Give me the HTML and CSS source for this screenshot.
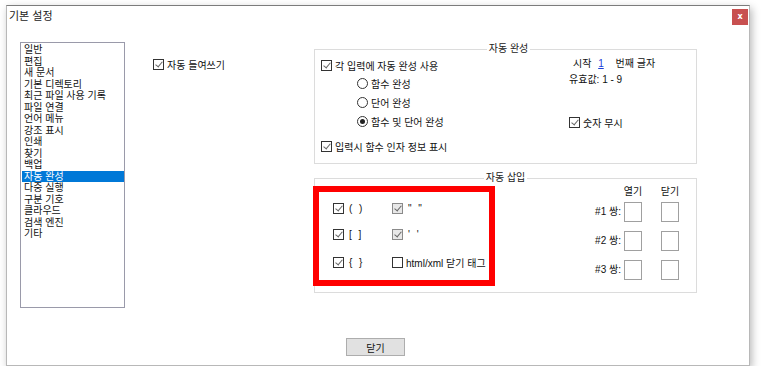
FILE: index.html
```html
<!DOCTYPE html>
<html lang="ko">
<head>
    <meta charset="UTF-8">
    <title>기본 설정</title>
    <link rel="stylesheet" href="styles.css">
</head>
<body>
    <div class="window">
        <div class="titlebar">
            <span class="title">기본 설정</span>
            <span class="close-x">x</span>
        </div>

        <div class="content">
            <ul class="menu-list">
                <li>일반</li>
                <li>편집</li>
                <li>새 문서</li>
                <li>기본 디렉토리</li>
                <li>최근 파일 사용 기록</li>
                <li>파일 연결</li>
                <li>언어 메뉴</li>
                <li>강조 표시</li>
                <li>인쇄</li>
                <li>찾기</li>
                <li>백업</li>
                <li class="selected">자동 완성</li>
                <li>다중 실행</li>
                <li>구분 기호</li>
                <li>클라우드</li>
                <li>검색 엔진</li>
                <li>기타</li>
            </ul>

            <div class="side-col">
                <label class="opt opt-indent"><span class="chk on"></span>자동 들여쓰기</label>
            </div>

            <div class="groups">
                <fieldset class="group">
                    <legend>자동 완성</legend>
                    <div class="complete-grid">
                        <div class="complete-left">
                            <label class="opt row-first"><span class="chk on"></span>각 입력에 자동 완성 사용</label>
                            <label class="opt row-radio"><span class="radio"></span>함수 완성</label>
                            <label class="opt row-radio"><span class="radio"></span>단어 완성</label>
                            <label class="opt row-radio"><span class="radio on"></span>함수 및 단어 완성</label>
                            <label class="opt row-last"><span class="chk on"></span>입력시 함수 인자 정보 표시</label>
                        </div>
                        <div class="complete-right">
                            <div class="start-row">시작 <span class="start-num">1</span> 번째 글자</div>
                            <div class="valid-row">유효값: 1 - 9</div>
                            <label class="opt row-num"><span class="chk on"></span>숫자 무시</label>
                        </div>
                    </div>
                </fieldset>

                <fieldset class="group group-insert">
                    <legend>자동 삽입</legend>
                    <div class="insert-wrap">
                        <div class="insert-grid">
                            <label class="opt"><span class="chk on"></span><span class="sym">( )</span></label>
                            <label class="opt"><span class="chk on dim"></span><span class="sym">" "</span></label>
                            <label class="opt"><span class="chk on"></span><span class="sym">[ ]</span></label>
                            <label class="opt"><span class="chk on dim"></span><span class="sym">' '</span></label>
                            <label class="opt"><span class="chk on"></span><span class="sym">{ }</span></label>
                            <label class="opt"><span class="chk"></span>html/xml 닫기 태그</label>
                        </div>
                        <div class="pair-grid">
                            <span></span>
                            <span class="pair-head">열기</span>
                            <span class="pair-head">닫기</span>

                            <span class="pair-label">#1 쌍:</span>
                            <span class="pair-box"></span>
                            <span class="pair-box"></span>

                            <span class="pair-label">#2 쌍:</span>
                            <span class="pair-box"></span>
                            <span class="pair-box"></span>

                            <span class="pair-label">#3 쌍:</span>
                            <span class="pair-box"></span>
                            <span class="pair-box"></span>
                        </div>
                    </div>
                </fieldset>

                <!-- annotation frame drawn over the insert options -->
                <div class="highlight-frame"></div>
            </div>
        </div>

        <div class="footer">
            <button class="btn-close">닫기</button>
        </div>
    </div>
</body>
</html>
```

FILE: styles.css
```css
body {
    margin: 0;
    background: #ffffff;
    font-family: "Liberation Sans", "Noto Sans CJK KR", sans-serif;
    font-size: 10px;
    color: #111111;
}
.window {
    box-sizing: border-box;
    width: 744px;
    height: 361px;
    margin: 5px 0 0 6px;
    background: #ffffff;
    border: 1px solid #b8b8b8;
    border-top-color: #7c7c7c;
    box-shadow: 2px 3px 8px rgba(0, 0, 0, 0.28);
    display: flex;
    flex-direction: column;
}
.titlebar {
    height: 36px;
    display: flex;
    justify-content: space-between;
    align-items: flex-start;
}
.title {
    font-size: 11px;
    line-height: 14px;
    padding: 3px 0 0 2px;
    color: #1a1a1a;
}
.close-x {
    width: 16px;
    height: 16px;
    margin: 3px 1px 0 0;
    background: #c85050;
    color: #ffffff;
    font-family: "DejaVu Sans", sans-serif;
    font-weight: bold;
    font-size: 8px;
    line-height: 15px;
    text-align: center;
}
.content {
    display: flex;
    padding-left: 13px;
    height: 266px;
}

/* left category list */
.menu-list {
    box-sizing: border-box;
    width: 105px;
    height: 266px;
    margin: 0;
    padding: 1px 0 0 0;
    list-style: none;
    border: 1px solid #9a9aaa;
}
.menu-list li {
    line-height: 11.5px;
    height: 11.5px;
    margin-left: 1px;
    padding-left: 2px;
    white-space: nowrap;
}
.menu-list li.selected {
    background: #0078d7;
    color: #ffffff;
}

.side-col {
    width: 161px;
    margin-left: 28px;
    flex: none;
}
.opt-indent {
    margin-top: 13px;
    height: 18px;
}

/* generic option rows */
.opt {
    display: flex;
    align-items: center;
    white-space: nowrap;
}
.chk {
    box-sizing: border-box;
    width: 11px;
    height: 11px;
    border: 1px solid #333333;
    background: #ffffff;
    margin-right: 3px;
    flex: none;
    position: relative;
}
.chk.on::after {
    content: "";
    position: absolute;
    left: 3px;
    top: 0px;
    width: 3px;
    height: 6px;
    border: solid #666666;
    border-width: 0 1px 1px 0;
    transform: rotate(40deg);
}
.chk.dim {
    border-color: #8a8a8a;
    background: #e8e8e8;
}
.sym {
    letter-spacing: 2px;
    padding-left: 2px;
}
.radio {
    box-sizing: border-box;
    width: 11px;
    height: 11px;
    border: 1px solid #333333;
    border-radius: 50%;
    margin-right: 3px;
    flex: none;
    display: flex;
    align-items: center;
    justify-content: center;
}
.radio.on::after {
    content: "";
    width: 5px;
    height: 5px;
    border-radius: 50%;
    background: #222222;
}

/* group boxes */
.groups {
    position: relative;
    width: 383px;
}
.group {
    box-sizing: border-box;
    width: 383px;
    height: 122px;
    margin: 0;
    padding: 0 0 0 6px;
    border: 1px solid #dcdcdc;
}
.group legend {
    margin: 0 auto;
    padding: 0 2px;
    line-height: 14px;
    font-size: 10px;
    color: #222222;
}
.group-insert {
    margin-top: 7px;
    padding: 0;
}

.complete-grid {
    display: grid;
    grid-template-columns: 248px auto;
}
.row-first {
    height: 18px;
}
.row-radio {
    height: 19px;
    padding-left: 36px;
}
.row-last {
    height: 19px;
    margin-top: 6px;
}
.start-row {
    height: 16px;
    line-height: 16px;
    padding-left: 4px;
}
.start-num {
    color: #1c3fd8;
    text-decoration: underline;
    margin: 0 9px 0 4px;
}
.valid-row {
    height: 16px;
    line-height: 16px;
}
.row-num {
    height: 18px;
    margin-top: 25px;
}

.insert-wrap {
    display: flex;
    justify-content: space-between;
    align-items: flex-start;
}
.insert-grid {
    display: grid;
    grid-template-columns: 59px auto;
    grid-template-rows: 26px 26px 30px;
    padding: 10px 0 0 18px;
}
.pair-grid {
    display: grid;
    grid-template-columns: auto 21px 37px;
    grid-template-rows: 17px 29px 29px 20px;
    padding-right: 17px;
}
.pair-head {
    justify-self: end;
    width: 18px;
    display: flex;
    justify-content: center;
    line-height: 14px;
    white-space: nowrap;
}
.pair-label {
    line-height: 20px;
    text-align: right;
}
.pair-box {
    justify-self: end;
    box-sizing: border-box;
    width: 18px;
    height: 20px;
    border: 1px solid #a0a0a0;
}

.highlight-frame {
    position: absolute;
    left: -1px;
    top: 144px;
    box-sizing: border-box;
    width: 182px;
    height: 100px;
    border: 6px solid #ff0000;
}

.footer {
    display: flex;
    justify-content: center;
    padding: 30px 5px 0 0;
}
.btn-close {
    box-sizing: border-box;
    width: 59px;
    height: 18px;
    padding: 0;
    background: #e1e1e1;
    border: 1px solid #adadad;
    font-family: inherit;
    font-size: 10px;
    color: #111111;
}
```
